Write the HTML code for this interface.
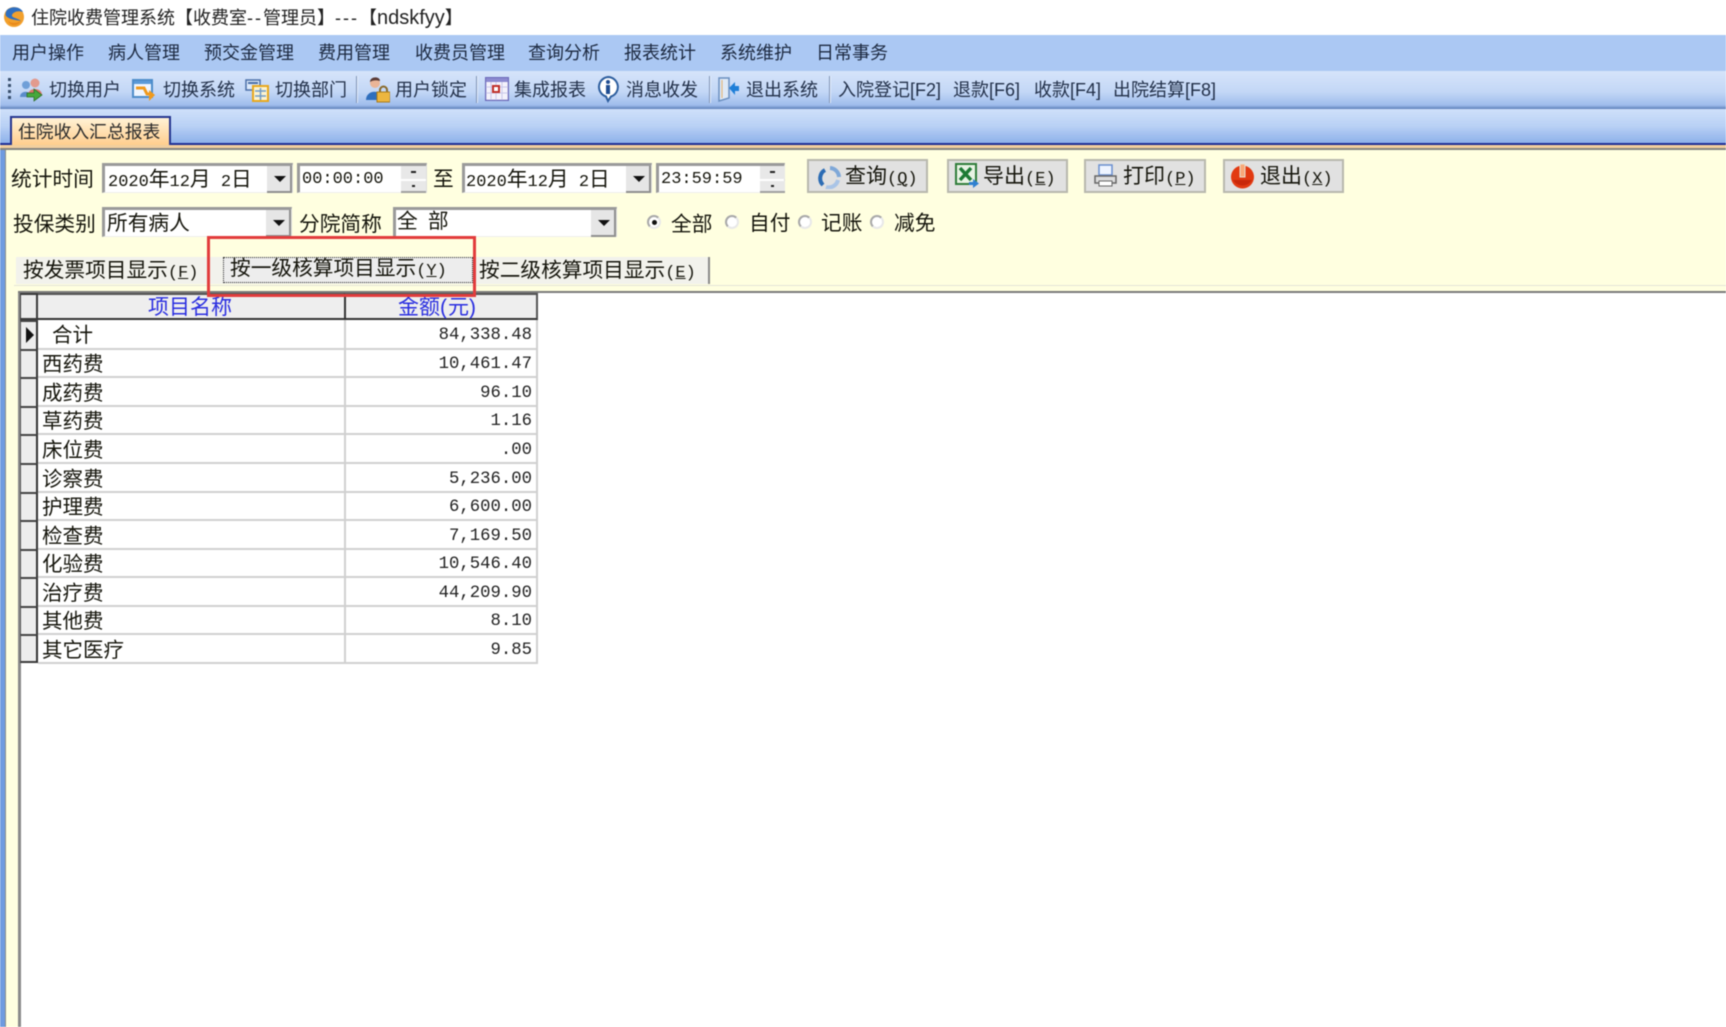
<!DOCTYPE html>
<html lang="zh-CN"><head><meta charset="utf-8"><title>住院收费管理系统</title>
<style>
html,body{margin:0;padding:0;background:#fff}
#p{position:relative;width:1726px;height:1027px;overflow:hidden;background:#fff;font-family:"Liberation Sans","Noto Sans CJK SC",sans-serif;color:#222;filter:blur(.4px)}
#p div,#p svg{position:absolute}
.t{white-space:nowrap;line-height:26px;height:26px}
.m{font-size:18px;color:#1c2940;top:40px}
.b{font-size:18px;color:#223049;top:77px}
.f{font-size:20.7px;color:#15150c}
.e{font-family:"Liberation Mono","Noto Sans CJK SC",monospace;font-size:17px}
.u{font-family:"Liberation Mono",monospace;font-size:17px}
.u u{text-decoration-thickness:1px}
.fld{background:#fff;border-top:3px solid #9a9a9a;border-left:3px solid #9a9a9a;border-right:1px solid #ddd;border-bottom:1px solid #eee;box-sizing:border-box}
.dd{background:#e6e6e6;border-right:2px solid #8f8f8f;border-bottom:2px solid #8f8f8f;box-sizing:border-box}
.tri{width:0;height:0;border-left:6px solid transparent;border-right:6px solid transparent;border-top:6px solid #111}
.sp{background:#e8e8e8;box-sizing:border-box}
.btn{background:#e1e1e1;border:2px solid #b8b8ae;box-sizing:border-box;height:34px;top:159px}
.sep{width:1px;top:76px;height:27px;background:#7f93b5;border-right:1px solid #e4eefc}
.rad{width:14px;height:14px;border-radius:50%;background:#fff;border:2px solid #a8a8a8;border-right-color:#e8e8e8;border-bottom-color:#e8e8e8;box-sizing:border-box;top:215px}
.ind{left:20px;width:18px;box-sizing:border-box;background:#ededed;border-top:2px solid #444;border-left:1px solid #555;border-right:2px solid #333}
.rl{left:38px;width:500px;height:2px;background:#d0d0d0}
.c1{font-size:20.5px;color:#15150c;left:42px}
.c2{font-family:"Liberation Mono",monospace;font-size:17.3px;color:#222;right:1194px}
</style></head><body><div id="p">

<!-- title -->
<svg style="left:3px;top:6px" width="22" height="22" viewBox="0 0 22 22"><circle cx="11" cy="11" r="10" fill="#f2a02c"/><path d="M4 4C8 0 17 0 20 6C15 4 10 6 9 9C8 12 15 12 18 15C14 14 7 14 3 10C2 8 3 5 4 4Z" fill="#2f6fc0"/><path d="M5 15C9 18 14 17 18 15C15 20 8 21 5 15Z" fill="#e8891c"/></svg>
<div class="t" style="left:31px;top:5px;font-size:18px;color:#222">住院收费管理系统【收费室<span style="letter-spacing:2px">--</span>管理员】<span style="letter-spacing:2px">---</span>【<span style="font-size:20px">ndskfyy</span>】</div>

<!-- menu -->
<div style="left:0;top:35px;width:1726px;height:36px;background:#abc8f3"></div>
<div class="t m" style="left:12px">用户操作</div>
<div class="t m" style="left:108px">病人管理</div>
<div class="t m" style="left:204px">预交金管理</div>
<div class="t m" style="left:318px">费用管理</div>
<div class="t m" style="left:415px">收费员管理</div>
<div class="t m" style="left:528px">查询分析</div>
<div class="t m" style="left:624px">报表统计</div>
<div class="t m" style="left:720px">系统维护</div>
<div class="t m" style="left:816px">日常事务</div>

<!-- toolbar -->
<div style="left:0;top:71px;width:1726px;height:38px;background:linear-gradient(#d6e4fa,#c3d7f6 55%,#9fbcec 90%,#5d7fb8)"></div>
<div style="left:8px;top:78px;width:3px;height:3px;background:#39506e;box-shadow:0 6px #39506e,0 12px #39506e,0 18px #39506e"></div>
<svg style="left:19px;top:76px" width="25" height="26" viewBox="0 0 25 26"><circle cx="7" cy="9" r="4" fill="#6f9fd8"/><path d="M1 21C1 14 12 14 13 21Z" fill="#5b8ccb"/><circle cx="16" cy="7" r="4.500" fill="#e29a8e"/><path d="M9 19C9 11 23 11 23 19Z" fill="#d9776a"/><path d="M8 17H15V13L23 19L15 25V21H8Z" fill="#46a83c" stroke="#2e6e28" stroke-width=".8"/></svg>
<div class="t b" style="left:49px">切换用户</div>
<svg style="left:132px;top:79px" width="24" height="24" viewBox="0 0 24 24"><rect x="1" y="1" width="19" height="17" fill="#eef5ff" stroke="#4d8cc9" stroke-width="2"/><rect x="2" y="2" width="17" height="3" fill="#5a9ad8"/><path d="M4 9H12L15 15H20" fill="none" stroke="#f09a1c" stroke-width="3"/><path d="M17 11L23 16L17 22Z" fill="#f09a1c"/></svg>
<div class="t b" style="left:163px">切换系统</div>
<svg style="left:245px;top:78px" width="24" height="24" viewBox="0 0 24 24"><rect x="1" y="2" width="14" height="10" fill="#dce9fa" stroke="#4a6fa8" stroke-width="1.500"/><rect x="3" y="4" width="10" height="2" fill="#4a6fa8"/><rect x="8" y="8" width="15" height="15" fill="#fdf3cf" stroke="#e8a81e" stroke-width="2"/><path d="M10 13H21M10 18H21M15.500 10V22" stroke="#6f9bc8" stroke-width="1.500"/></svg>
<div class="t b" style="left:275px">切换部门</div>
<div class="sep" style="left:356px"></div>
<svg style="left:366px;top:76px" width="24" height="27" viewBox="0 0 24 27"><circle cx="9" cy="7" r="5" fill="#eab598"/><path d="M4 6C4 0 14 0 14 5C10 4 7 4 4 6Z" fill="#5a3a35"/><path d="M0 24C0 13 17 13 17 24Z" fill="#2f6fbd"/><path d="M14 14A3.500 3.500 0 0 1 21 14V17H14Z" fill="none" stroke="#8a6a2a" stroke-width="2"/><rect x="11" y="16" width="13" height="10" fill="#edb63f" stroke="#a87a1a"/></svg>
<div class="t b" style="left:395px">用户锁定</div>
<div class="sep" style="left:476px"></div>
<svg style="left:485px;top:77px" width="24" height="24" viewBox="0 0 24 24"><rect x=".5" y=".5" width="23" height="23" fill="#f4f2fb" stroke="#6a68b8" stroke-width="1.500"/><rect x="1" y="1" width="22" height="4" fill="#8c8ad0"/><path d="M6 5V23M11 5V23M17 5V23M1 10H23M1 16H23" stroke="#c9c7ea"/><rect x="8" y="9" width="6" height="6" fill="#fff" stroke="#c0302a" stroke-width="2"/></svg>
<div class="t b" style="left:514px">集成报表</div>
<svg style="left:596px;top:75px" width="24" height="28" viewBox="0 0 24 28"><path d="M12 2A10 10 0 0 1 15 21.500L12 26L10 21.500A10 10 0 0 1 12 2Z" fill="#fff" stroke="#2d5e9e" stroke-width="2"/><circle cx="12" cy="7" r="2" fill="#1f4d92"/><rect x="10" y="10" width="4" height="9" fill="#1f4d92"/></svg>
<div class="t b" style="left:626px">消息收发</div>
<div class="sep" style="left:709px"></div>
<svg style="left:717px;top:76px" width="23" height="26" viewBox="0 0 23 26"><path d="M2 2H12V22L2 25Z" fill="#dfe9f6" stroke="#6a8fc0" stroke-width="1.500"/><path d="M5 4V22" stroke="#e0b070"/><path d="M12 12L18 6V10H22V15H18V19Z" fill="#1f7fd8"/></svg>
<div class="t b" style="left:746px">退出系统</div>
<div class="sep" style="left:829px"></div>
<div class="t b" style="left:838px">入院登记[F2]</div>
<div class="t b" style="left:953px">退款[F6]</div>
<div class="t b" style="left:1034px">收款[F4]</div>
<div class="t b" style="left:1113px">出院结算[F8]</div>

<!-- tab strip -->
<div style="left:0;top:109px;width:1726px;height:34px;background:linear-gradient(#cfe0fa,#b9d1f5 50%,#8eb1ea)"></div>
<div style="left:0;top:143px;width:1726px;height:2px;background:#1e2f96"></div>
<div style="left:0;top:145px;width:1726px;height:3px;background:#f2cf9e"></div>
<div style="left:0;top:148px;width:1726px;height:2px;background:#85857f"></div>
<div style="left:10px;top:116px;width:161px;height:29px;box-sizing:border-box;border:2px solid #25358f;border-bottom:0;background:linear-gradient(#fff2d6,#ffce8e)"></div>
<div class="t" style="left:18px;top:119px;font-size:17.800px;color:#2a2a2a">住院收入汇总报表</div>

<!-- body -->
<div style="left:0;top:150px;width:5px;height:877px;background:#6f9be0"></div>
<div style="left:5px;top:150px;width:1px;height:877px;background:#8a8f8a"></div>
<div style="left:6px;top:150px;width:1720px;height:877px;background:#ffffe0"></div>
<div style="left:18px;top:292px;width:1708px;height:735px;background:#fff"></div>
<div style="left:18px;top:292px;width:3px;height:735px;background:#8a8a8a"></div>
<div style="left:18px;top:291px;width:1708px;height:2px;background:#7a7a7a"></div>
<div style="left:14px;top:285px;width:1712px;height:1px;background:#e4e4d8"></div>

<!-- row 1 -->
<div class="t f" style="left:11px;top:167px">统计时间</div>
<div class="fld" style="left:102px;top:163px;width:191px;height:30px"></div>
<div class="dd" style="left:267px;top:166px;width:25px;height:27px"></div><div class="tri" style="left:274px;top:176px"></div>
<div class="t f" style="left:108px;top:167px"><span class="e">2020</span>年<span class="e">12</span>月<span class="e">&nbsp;2</span>日</div>
<div class="fld" style="left:297px;top:163px;width:130px;height:30px"></div>
<div class="t f e" style="left:302px;top:167px">00:00:00</div>
<div class="sp" style="left:401px;top:166px;width:25px;height:13px"></div><div class="sp" style="left:401px;top:181px;width:25px;height:12px;border-bottom:2px solid #a0a0a0"></div>
<div style="left:411px;top:171px;width:5px;height:2px;background:#222"></div><div style="left:412px;top:185px;width:3px;height:2px;background:#222"></div>
<div class="t f" style="left:433px;top:167px">至</div>
<div class="fld" style="left:462px;top:163px;width:190px;height:30px"></div>
<div class="dd" style="left:626px;top:166px;width:25px;height:27px"></div><div class="tri" style="left:633px;top:176px"></div>
<div class="t f" style="left:466px;top:167px"><span class="e">2020</span>年<span class="e">12</span>月<span class="e">&nbsp;2</span>日</div>
<div class="fld" style="left:656px;top:163px;width:129px;height:30px"></div>
<div class="t f e" style="left:661px;top:167px">23:59:59</div>
<div class="sp" style="left:760px;top:166px;width:25px;height:13px"></div><div class="sp" style="left:760px;top:181px;width:25px;height:12px;border-bottom:2px solid #a0a0a0"></div>
<div style="left:770px;top:171px;width:5px;height:2px;background:#222"></div><div style="left:771px;top:185px;width:3px;height:2px;background:#222"></div>

<!-- buttons -->
<div class="btn" style="left:807px;width:121px"></div>
<svg style="left:818px;top:166px" width="23" height="23" viewBox="0 0 23 23"><path d="M12 2A9.500 9.500 0 0 1 21 11" fill="none" stroke="#7fa8d8" stroke-width="4"/><path d="M20 14A9.500 9.500 0 0 1 8 21" fill="none" stroke="#a9c4e6" stroke-width="4"/><path d="M5 19A9.500 9.500 0 0 1 7 4" fill="none" stroke="#2c6cb4" stroke-width="4"/></svg>
<div class="t f" style="left:845px;top:164px;font-size:21px">查询<span class="u">(<u>Q</u>)</span></div>
<div class="btn" style="left:947px;width:121px"></div>
<svg style="left:955px;top:163px" width="25" height="26" viewBox="0 0 25 26"><rect x="1" y="1" width="20" height="20" fill="#e8f3e4" stroke="#2f7d3a" stroke-width="2"/><path d="M5 5L16 17M16 5L5 17" stroke="#1d7a34" stroke-width="3.500"/><path d="M14 19H18V16L24 20.500L18 25V22H14Z" fill="#2f80d0"/></svg>
<div class="t f" style="left:983px;top:164px;font-size:21px">导出<span class="u">(<u>E</u>)</span></div>
<div class="btn" style="left:1084px;width:122px"></div>
<svg style="left:1093px;top:164px" width="25" height="24" viewBox="0 0 25 24"><rect x="6" y="1" width="13" height="10" fill="#eef4ff" stroke="#6a8fd0" stroke-width="1.500"/><path d="M2 12H23V19H2Z" fill="#dcdcdc" stroke="#666" stroke-width="1.500"/><rect x="6" y="17" width="13" height="5" fill="#fff" stroke="#666"/></svg>
<div class="t f" style="left:1123px;top:164px;font-size:21px">打印<span class="u">(<u>P</u>)</span></div>
<div class="btn" style="left:1223px;width:121px"></div>
<svg style="left:1230px;top:163px" width="25" height="26" viewBox="0 0 25 26"><circle cx="12.500" cy="14" r="11.500" fill="#e23a12"/><path d="M3 17A11 11 0 0 0 22 17Z" fill="#c9280a"/><rect x="10" y="1" width="5" height="13" fill="#f8a878" stroke="#e8e0d0"/></svg>
<div class="t f" style="left:1260px;top:164px;font-size:21px">退出<span class="u">(<u>X</u>)</span></div>

<!-- row 2 -->
<div class="t f" style="left:13px;top:212px">投保类别</div>
<div class="fld" style="left:102px;top:207px;width:190px;height:30px"></div>
<div class="dd" style="left:266px;top:210px;width:25px;height:27px"></div><div class="tri" style="left:273px;top:220px"></div>
<div class="t f" style="left:107px;top:211px">所有病人</div>
<div class="t f" style="left:299px;top:212px">分院简称</div>
<div class="fld" style="left:393px;top:207px;width:224px;height:30px"></div>
<div class="dd" style="left:591px;top:210px;width:25px;height:27px"></div><div class="tri" style="left:598px;top:220px"></div>
<div class="t f" style="left:397px;top:209px">全<span class="e">&nbsp;</span>部</div>

<div class="rad" style="left:647px"></div><div style="left:652px;top:220px;width:5px;height:5px;border-radius:50%;background:#111"></div>
<div class="t f" style="left:671px;top:212px">全部</div>
<div class="rad" style="left:725px"></div>
<div class="t f" style="left:749px;top:211px">自付</div>
<div class="rad" style="left:798px"></div>
<div class="t f" style="left:821px;top:211px">记账</div>
<div class="rad" style="left:870px"></div>
<div class="t f" style="left:894px;top:211px">减免</div>

<!-- tabs -->
<div style="left:16px;top:257px;width:693px;height:27px;background:#f2f2ec"></div>
<div style="left:708px;top:257px;width:2px;height:27px;background:#8a8a8a"></div>
<div class="t f" style="left:23px;top:258px">按发票项目显示<span class="u">(<u>F</u>)</span></div>
<div style="left:223px;top:257px;width:250px;height:26px;box-sizing:border-box;border:1px dotted #222;background:#ededed"></div>
<div class="t f" style="left:230px;top:256px">按一级核算项目显示<span class="u">(<u>Y</u>)</span></div>
<div class="t f" style="left:479px;top:258px">按二级核算项目显示<span class="u">(<u>E</u>)</span></div>

<!-- table -->
<div style="left:20px;top:293px;width:517px;height:370px;background:#fff"></div>
<div style="left:20px;top:293px;width:18px;height:27px;background:#ececec;box-sizing:border-box;border:2px solid #3a3a3a;border-left-width:1px"></div>
<div style="left:38px;top:293px;width:306px;height:27px;background:#eeeeee;border-bottom:2px solid #333;border-top:2px solid #555;box-sizing:border-box"></div>
<div style="left:344px;top:293px;width:194px;height:27px;background:#eeeeee;border-bottom:2px solid #333;border-top:2px solid #555;border-right:2px solid #555;border-left:2px solid #333;box-sizing:border-box"></div>
<div class="t" style="left:148px;top:295px;font-size:21px;color:#2a2ee0">项目名称</div>
<div class="t" style="left:398px;top:295px;font-size:21px;color:#2a2ee0">金额<span style="letter-spacing:1px">(</span>元<span style="letter-spacing:1px">)</span></div>
<div style="left:344px;top:320px;width:2px;height:343px;background:#d0d0d0"></div>
<div style="left:536px;top:320px;width:2px;height:343px;background:#d0d0d0"></div>

<div class="ind" style="top:320px;height:29px"></div>
<div class="ind" style="top:349px;height:28px"></div>
<div class="ind" style="top:377px;height:29px"></div>
<div class="ind" style="top:406px;height:28px"></div>
<div class="ind" style="top:434px;height:29px"></div>
<div class="ind" style="top:463px;height:29px"></div>
<div class="ind" style="top:492px;height:28px"></div>
<div class="ind" style="top:520px;height:29px"></div>
<div class="ind" style="top:549px;height:28px"></div>
<div class="ind" style="top:577px;height:29px"></div>
<div class="ind" style="top:606px;height:28px"></div>
<div class="ind" style="top:634px;height:29px;border-bottom:2px solid #3a3a3a"></div>
<div style="left:26px;top:327px;width:0;height:0;border-top:8px solid transparent;border-bottom:8px solid transparent;border-left:8px solid #111"></div>

<div class="rl" style="top:348px"></div><div class="rl" style="top:376px"></div><div class="rl" style="top:405px"></div><div class="rl" style="top:433px"></div><div class="rl" style="top:462px"></div><div class="rl" style="top:491px"></div><div class="rl" style="top:519px"></div><div class="rl" style="top:548px"></div><div class="rl" style="top:576px"></div><div class="rl" style="top:605px"></div><div class="rl" style="top:633px"></div><div class="rl" style="top:662px"></div>

<div class="t c1" style="left:52px;top:323px">合计</div><div class="t c2" style="top:323px">84,338.48</div>
<div class="t c1" style="top:352px">西药费</div><div class="t c2" style="top:352px">10,461.47</div>
<div class="t c1" style="top:381px">成药费</div><div class="t c2" style="top:381px">96.10</div>
<div class="t c1" style="top:409px">草药费</div><div class="t c2" style="top:409px">1.16</div>
<div class="t c1" style="top:438px">床位费</div><div class="t c2" style="top:438px">.00</div>
<div class="t c1" style="top:467px">诊察费</div><div class="t c2" style="top:467px">5,236.00</div>
<div class="t c1" style="top:495px">护理费</div><div class="t c2" style="top:495px">6,600.00</div>
<div class="t c1" style="top:524px">检查费</div><div class="t c2" style="top:524px">7,169.50</div>
<div class="t c1" style="top:552px">化验费</div><div class="t c2" style="top:552px">10,546.40</div>
<div class="t c1" style="top:581px">治疗费</div><div class="t c2" style="top:581px">44,209.90</div>
<div class="t c1" style="top:609px">其他费</div><div class="t c2" style="top:609px">8.10</div>
<div class="t c1" style="top:638px">其它医疗</div><div class="t c2" style="top:638px">9.85</div>

<!-- red annotation -->
<div style="left:207px;top:236px;width:269px;height:61px;box-sizing:border-box;border:3px solid #e23c3c"></div>

</div></body></html>
